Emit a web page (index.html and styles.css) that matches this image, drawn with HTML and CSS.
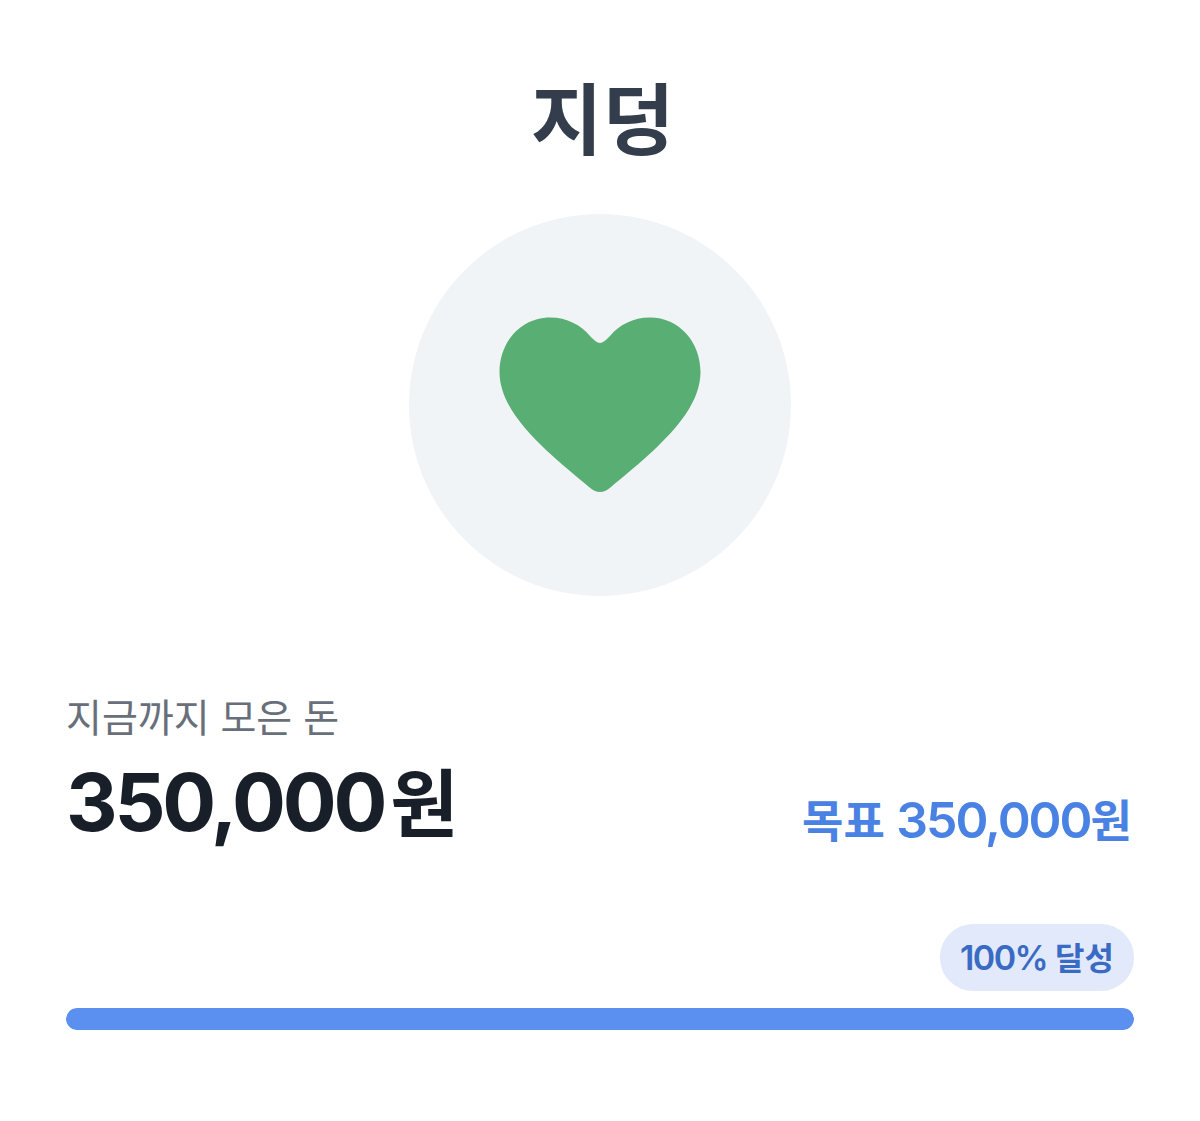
FILE: index.html
```html
<!DOCTYPE html>
<html lang="ko">
<head>
  <meta charset="UTF-8" />
  <meta name="viewport" content="width=device-width, initial-scale=1.0" />
  <title>지덩</title>
  <link rel="stylesheet" href="styles.css">
</head>
<body>
  <main class="goal-card">
    <h1 class="goal-title">지덩</h1>
    <div class="goal-icon">
      <svg class="heart" viewBox="0 0 202 176" aria-hidden="true">
        <path d="M101 26 C98 26 95 23 91 19 C82 8 68 .5 51 .5 C22 .5 .5 25 .5 55 C.5 85 25 112 47 133 C62 147 76 158 90 170 C94 173.5 97 175 101 175 C105 175 108 173.5 112 170 C126 158 140 147 155 133 C177 112 201.5 85 201.5 55 C201.5 25 180 .5 151 .5 C134 .5 120 8 111 19 C107 23 104 26 101 26 Z"/>
      </svg>
    </div>
    <div class="goal-summary">
      <div class="saved">
        <p class="saved-label">지금까지 모은 돈</p>
        <p class="saved-amount"><span class="saved-num">350,000</span><span class="saved-unit">원</span></p>
      </div>
      <p class="target">목표 <span class="target-num">350,000</span>원</p>
    </div>
    <div class="progress-head">
      <span class="progress-badge"><span class="badge-num">100%</span> 달성</span>
    </div>
    <div class="progress-track">
      <div class="progress-fill" style="width: 100%"></div>
    </div>
  </main>
</body>
</html>
```

FILE: styles.css
```css
* { box-sizing: border-box; margin: 0; padding: 0; }
body { background: #fff; font-family: Inter, "Noto Sans CJK KR", sans-serif; }
.goal-card { height: 1121px; padding: 0 66px; overflow: hidden; }
.goal-title { height: 214px; padding: 73px 0 0 5px; text-align: center; font-size: 78px; line-height: 96px; font-weight: 700; color: #333d4b; }
.goal-icon { width: 382px; height: 382px; margin: 0 auto; border-radius: 50%; background: #f1f4f6; display: flex; align-items: center; justify-content: center; }
.heart { width: 202px; height: 176px; fill: #59ae73; }
.goal-summary { display: flex; justify-content: space-between; align-items: flex-end; margin-top: 94px; }
.saved-label { font-size: 39px; line-height: 56px; color: #686f7a; font-weight: 400; }
.saved-amount { font-size: 74px; line-height: 96px; margin-top: 8px; font-weight: 700; color: #191f28; }
.saved-num { font-size: 80px; letter-spacing: -3.2px; }
.saved-unit { margin-left: 6px; }
.target { font-size: 45px; line-height: 60px; font-weight: 600; color: #4a82e4; margin-right: 2px; }
.target-num { font-size: 50px; letter-spacing: -2px; }
.progress-head { display: flex; justify-content: flex-end; margin-top: 72px; }
.progress-badge { height: 67px; padding: 0 20px; border-radius: 33px; background: #e1e9fa; color: #3a6bc4; font-size: 32px; line-height: 67px; font-weight: 600; }
.badge-num { font-size: 34px; letter-spacing: -1.6px; }
.progress-track { height: 22px; margin-top: 17px; border-radius: 11px; background: #e5e8eb; overflow: hidden; }
.progress-fill { height: 100%; border-radius: 11px; background: #5b90f0; }
```
